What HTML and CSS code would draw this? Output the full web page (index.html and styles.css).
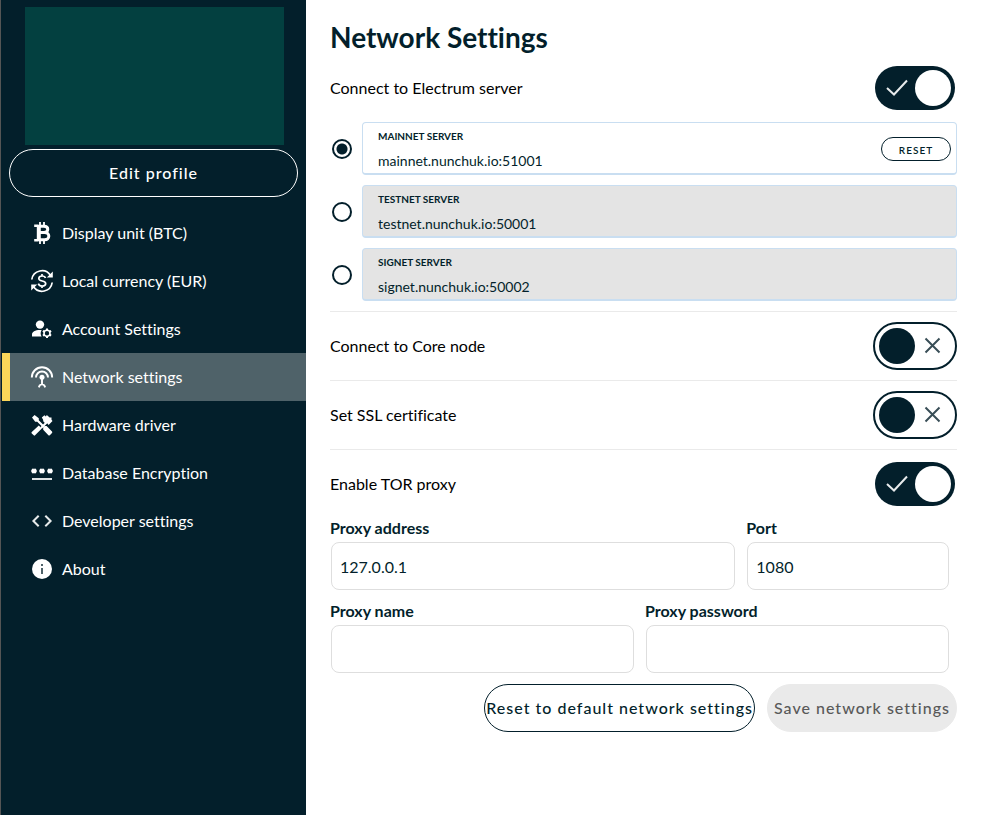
FILE: index.html
```html
<!DOCTYPE html>
<html lang="en">
<head>
<meta charset="utf-8">
<meta name="viewport" content="width=device-width, initial-scale=1">
<title>Network Settings</title>
<link rel="stylesheet" href="styles.css">
</head>
<body>
<div class="app">
  <aside class="sidebar">
    <div class="profile-card"></div>
    <button class="edit-profile" type="button">Edit profile</button>
    <nav class="menu">
      <a class="menu-item" href="#unit">
        <svg class="icon" viewBox="0 0 24 24" fill="none" stroke="#fff"><path d="M10 1v4M14 1v4M10 19v4M14 19v4" stroke-width="1.8"/><path d="M4.200 4.800h4M4.200 19.200h4" stroke-width="2.400"/><path d="M8.800 4v16" stroke-width="4"/><path d="M8 5.200h6c5 0 5 6.200 0 6.200H9h5.600c5.600 0 5.600 7.400 0 7.400H8" stroke-width="3"/></svg>
        <span>Display unit (BTC)</span></a>
      <a class="menu-item" href="#currency">
        <svg class="icon" viewBox="0 0 24 24" fill="none" stroke="#fff"><path d="M1.800 10.500A10.200 10.200 0 0 1 20.500 6.500M22.200 13.500A10.200 10.200 0 0 1 3.500 17.500" stroke-width="1.700"/><path d="M22.800 2.500v6h-6zM1.200 21.500v-6h6z" fill="#fff" stroke="none"/><path d="M15.500 9c-.5-1.500-1.800-2-3.400-2-2 0-3.300 1-3.300 2.500 0 3.400 6.900 1.600 6.900 5 0 1.700-1.500 2.600-3.600 2.600-1.900 0-3.200-.8-3.800-2.500M12 5v2M12 17v2" stroke-width="1.700"/></svg>
        <span>Local currency (EUR)</span></a>
      <a class="menu-item" href="#account">
        <svg class="icon" viewBox="0 0 24 24" fill="#fff"><circle cx="10" cy="7.600" r="4.200"/><path d="M10 13c-5 0-8 2-8 4.500V19.600h9.600a6.500 6.500 0 0 1 0-6.500C11 13 10.500 13 10 13z"/><g fill="none" stroke="#fff"><circle cx="17" cy="16.200" r="3" stroke-width="1.600"/><path d="M17 11.400v2M17 19v2M12.900 13.800l1.700 1M19.400 17.600l1.700 1M12.900 18.600l1.700-1M19.400 14.800l1.700-1" stroke-width="2"/></g></svg>
        <span>Account Settings</span></a>
      <a class="menu-item active" href="#network" aria-current="page">
        <svg class="icon" viewBox="0 0 24 24" fill="none" stroke="#fff"><path d="M1.800 12.500a10.200 10.200 0 0 1 20.400 0M6 12.500a6 6 0 0 1 12 0" stroke-width="1.900"/><circle cx="12" cy="12.300" r="2.500" fill="#fff" stroke="none"/><path d="M12 13v6.500M8.800 22.400l.8-1.800c1-1.600 3.800-1.600 4.800 0l.8 1.800" stroke-width="1.900"/></svg>
        <span>Network settings</span></a>
      <a class="menu-item" href="#hardware">
        <svg class="icon" viewBox="0 0 24 24" fill="#fff"><path d="M1.800 18.900l7-6.300 3 3-6.700 6.700a1 1 0 0 1-1.400 0l-1.900-1.900a1 1 0 0 1 0-1.500z"/><path d="M13.200 14.600l1.600-1.600h1.800l5.400 5.500a1 1 0 0 1 0 1.400l-2.200 2.300a1 1 0 0 1-1.400 0l-5.200-5.400z"/><path d="M2 4.600L4.600 2l4.200 3.200v2l6 6-1.600 1.600-6-6h-2z"/><path d="M10.300 14.200l6-6 1.500 1.500-6 6z"/><path d="M11.800 4.600L14.400 2.200l1.500 1.200.9-1.500 2.800 2.700h1.900v2.200l1 1.200-3.900 3.900-1.600-2-1.600.6-2-2-.4-2z"/></svg>
        <span>Hardware driver</span></a>
      <a class="menu-item" href="#database">
        <svg class="icon" viewBox="0 0 24 24" fill="none" stroke="#fff"><path d="M2 18h20" stroke="#dfe3e4" stroke-width="2"/><path d="M1.300 10h5.400M2.300 7.800l3.400 4.400M5.700 7.800l-3.400 4.400M9.300 10h5.400M10.300 7.800l3.400 4.400M13.700 7.800l-3.400 4.400M17.300 10h5.400M18.300 7.800l3.400 4.400M21.700 7.800l-3.400 4.400" stroke-width="2"/></svg>
        <span>Database Encryption</span></a>
      <a class="menu-item" href="#developer">
        <svg class="icon" viewBox="0 0 24 24" fill="none" stroke="#e6e9ea" stroke-width="2"><path d="M8.700 6.700L3.400 12l5.300 5.300M15.300 6.700l5.300 5.300-5.300 5.300"/></svg>
        <span>Developer settings</span></a>
      <a class="menu-item" href="#about">
        <svg class="icon" viewBox="0 0 24 24"><circle cx="12" cy="12" r="10" fill="#fff"/><path d="M11 7h2v2h-2zM11 11h2v6h-2z" fill="#4f6269"/></svg>
        <span>About</span></a>
    </nav>
  </aside>
  <main class="content">
    <h1 class="title">Network Settings</h1>
    <section class="section electrum">
      <div class="setting first">
        <label for="electrum">Connect to Electrum server</label>
        <span class="toggle"><input id="electrum" type="checkbox" role="switch" checked><svg viewBox="0 0 84 48"><path class="tick" d="M14 24l7 6.500L34 16.500"/></svg></span>
      </div>
      <div class="servers">
        <div class="server">
          <input class="radio" type="radio" name="server" aria-label="Mainnet server" checked>
          <div class="server-box">
            <div class="server-text"><label for="mainnet">MAINNET SERVER</label><input id="mainnet" type="text" value="mainnet.nunchuk.io:51001"></div>
            <button class="reset" type="button">RESET</button>
          </div>
        </div>
        <div class="server">
          <input class="radio" type="radio" name="server" aria-label="Testnet server">
          <div class="server-box disabled">
            <div class="server-text"><label for="testnet">TESTNET SERVER</label><input id="testnet" type="text" value="testnet.nunchuk.io:50001" readonly></div>
          </div>
        </div>
        <div class="server">
          <input class="radio" type="radio" name="server" aria-label="Signet server">
          <div class="server-box disabled">
            <div class="server-text"><label for="signet">SIGNET SERVER</label><input id="signet" type="text" value="signet.nunchuk.io:50002" readonly></div>
          </div>
        </div>
      </div>
    </section>
    <section class="section setting">
      <label for="core">Connect to Core node</label>
      <span class="toggle"><input id="core" type="checkbox" role="switch"><svg viewBox="0 0 84 48"><path class="cross" d="M52.500 16.500l14 14M66.500 16.500l-14 14"/></svg></span>
    </section>
    <section class="section setting">
      <label for="ssl">Set SSL certificate</label>
      <span class="toggle"><input id="ssl" type="checkbox" role="switch"><svg viewBox="0 0 84 48"><path class="cross" d="M52.500 16.500l14 14M66.500 16.500l-14 14"/></svg></span>
    </section>
    <section class="setting">
      <label for="tor">Enable TOR proxy</label>
      <span class="toggle"><input id="tor" type="checkbox" role="switch" checked><svg viewBox="0 0 84 48"><path class="tick" d="M14 24l7 6.500L34 16.500"/></svg></span>
    </section>
    <form class="proxy">
      <div class="fields wide-first">
        <div class="field"><label for="address">Proxy address</label><input id="address" type="text" value="127.0.0.1"></div>
        <div class="field"><label for="port">Port</label><input id="port" type="text" value="1080"></div>
      </div>
      <div class="fields">
        <div class="field"><label for="name">Proxy name</label><input id="name" type="text"></div>
        <div class="field"><label for="password">Proxy password</label><input id="password" type="password"></div>
      </div>
      <div class="actions">
        <button class="pill outline" type="reset">Reset to default network settings</button>
        <button class="pill save" type="submit" disabled>Save network settings</button>
      </div>
    </form>
  </main>
</div>
</body>
</html>
```
FILE: styles.css
```css
* { box-sizing: border-box; }
body {
  margin: 0;
  background: #fff;
  color: #031f2b;
  font: 16px/24px Lato, "Liberation Sans", sans-serif;
  font-variant-ligatures: none;
}
button, input { font: inherit; font-variant-ligatures: none; color: inherit; margin: 0; }
.app { display: grid; grid-template-columns: 306px 1fr; min-height: 100vh; }

.sidebar { background: #031f2b; border-left: 1px solid #555; padding: 7px 0 0; color: #fff; }
.profile-card {
  height: 138px;
  margin: 0 22px 0 24px;
  background: #034040;
}
.edit-profile {
  display: block;
  width: calc(100% - 16px);
  height: 48px;
  margin: 4px 8px 12px;
  border: 1px solid #fff;
  border-radius: 24px;
  background: none;
  font-weight: 500;
  letter-spacing: 1px;
}
.menu { margin-left: 1px; }
.menu-item {
  display: flex;
  align-items: center;
  gap: 8px;
  height: 48px;
  padding-left: 20px;
  border-left: 8px solid transparent;
  color: #fff;
  text-decoration: none;
}
.menu-item.active { background: #4f6269; border-left-color: #fbd659; }
.icon { width: 24px; height: 24px; flex: none; }

.content { padding: 19px 49px 20px 24px; min-width: 0; }
.title { margin: 0; font-size: 28px; line-height: 36px; font-weight: 700; }
.section { border-bottom: 1px solid #eaeaea; }
.electrum { padding-bottom: 10px; }
.setting { display: flex; align-items: center; justify-content: space-between; min-height: 68px; color: #000; }
.setting.section { min-height: 69px; }
.setting.first { min-height: 66px; margin-bottom: 1px; }
.toggle { display: grid; width: 84px; height: 48px; }
.toggle input, .toggle svg { grid-area: 1 / 1; width: 84px; height: 48px; }
.toggle svg { pointer-events: none; fill: none; stroke-width: 2; }
.toggle input {
  appearance: none;
  display: flex;
  align-items: center;
  padding: 0 4px;
  border: 2px solid #031f2b;
  border-radius: 24px;
}
.toggle input::before { content: ""; width: 36px; height: 36px; border-radius: 50%; background: #031f2b; }
.toggle input:checked { justify-content: flex-end; border-color: transparent; background: #031f2b padding-box; }
.toggle input:checked::before { background: #fff; }
.tick { stroke: #e8ebec; }
.cross { stroke: #394e57; }

.servers { display: grid; gap: 10px; }
.server { display: flex; align-items: center; gap: 10px; padding-left: 2px; }
.radio {
  appearance: none;
  flex: none;
  width: 20px;
  height: 20px;
  border: 2px solid #031f2b;
  border-radius: 50%;
}
.radio:checked { background: radial-gradient(circle, #031f2b 5px, transparent 6px); }
.server-box {
  display: flex;
  flex: 1;
  align-items: center;
  height: 53px;
  padding: 2px 5px 0 15px;
  border: 1px solid #c9def1;
  border-bottom-width: 2px;
  border-radius: 4px;
}
.server-box.disabled { background: #e4e4e4; }
.server-text { display: grid; flex: 1; font-size: 14px; line-height: 20px; }
.server-text label { padding-top: 2px; font-size: 10px; line-height: 20px; font-weight: 700; }
.server-text input { width: 100%; height: 28px; padding: 0; border: 0; background: none; }
.reset {
  width: 70px;
  height: 24px;
  padding: 0;
  border: 1px solid #031f2b;
  border-radius: 12px;
  background: #fff;
  font-size: 10px;
  font-weight: 600;
  letter-spacing: 1px;
}

.fields { display: grid; grid-template-columns: 1fr 1fr; gap: 11px; margin: 0 8px 11px 0; }
.wide-first { grid-template-columns: 2fr 1fr; }
.field { display: grid; gap: 4px; min-width: 0; }
.field label { line-height: 20px; font-weight: 700; }
.field input {
  min-width: 0;
  height: 48px;
  margin-left: 1px;
  padding: 0 8px;
  border: 1px solid #dedede;
  border-radius: 8px;
  background: #fff;
}
.actions { display: flex; justify-content: flex-end; gap: 12px; }
.pill {
  height: 48px;
  padding: 0 1px;
  border: 1px solid #031f2b;
  border-radius: 24px;
  background: #fff;
  font-weight: 500;
  letter-spacing: 1px;
  white-space: nowrap;
}
.pill.save { padding: 0 6px; border-color: #eaeaea; background: #eaeaea; color: #595959; }
```
